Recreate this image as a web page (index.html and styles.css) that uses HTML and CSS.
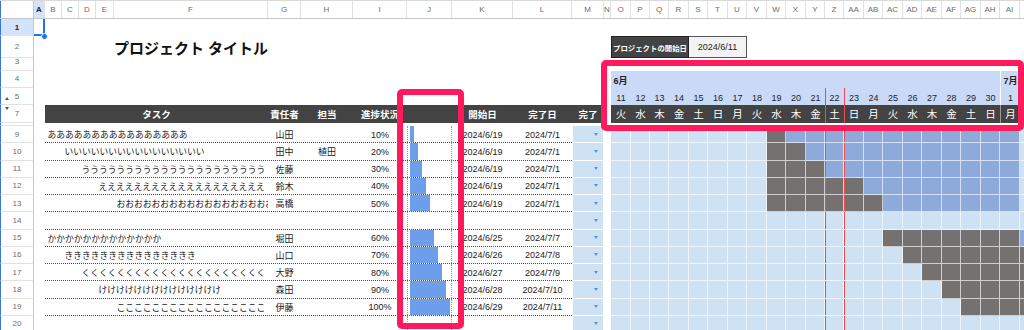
FILE: index.html
```html
<!DOCTYPE html>
<html lang="ja">
<head>
    <meta charset="UTF-8">
    <meta name="viewport" content="width=device-width, initial-scale=1.0">
    <title>ガントチャート</title>
    <link rel="stylesheet" href="styles.css">
</head>
<body>
<div class="sheet">
    <div class="colhead">
        <div class="corner"></div>
        <div class="on">A</div><div>B</div><div>C</div><div>D</div><div>E</div><div>F</div><div>G</div>
        <div>H</div><div>I</div><div>J</div><div>K</div><div>L</div><div>M</div><div>N</div>
        <div>O</div><div>P</div><div>Q</div><div>R</div><div>S</div><div>T</div><div>U</div>
        <div>V</div><div>W</div><div>X</div><div>Y</div><div>Z</div><div>AA</div><div>AB</div>
        <div>AC</div><div>AD</div><div>AE</div><div>AF</div><div>AG</div><div>AH</div><div>AI</div><div>AJ</div>
    </div>

    <div class="row">
        <div class="rh on">1</div>
        <div class="a1"><span class="handle"></span></div>
    </div>
    <div class="row">
        <div class="rh">2</div>
        <div class="tbl"><div class="title">プロジェクト タイトル</div></div>
        <div class="gantt">
            <div class="start-label">プロジェクトの開始日</div>
            <div class="start-value">2024/6/11</div>
        </div>
    </div>
    <div class="row"><div class="rh">3</div></div>
    <div class="row">
        <div class="rh">4</div>
        <div class="gantt band months" id="months"></div>
    </div>
    <div class="row">
        <div class="rh">5<span class="fold up"></span></div>
        <div class="gantt band days" id="days"></div>
    </div>
    <div class="row head">
        <div class="rh">7<span class="fold down"></span></div>
        <div class="tbl">
            <div class="task-h">タスク</div>
            <div>責任者</div>
            <div>担当</div>
            <div>進捗状況</div>
            <div></div>
            <div>開始日</div>
            <div>完了日</div>
        </div>
        <div class="m">完了</div>
        <div class="gantt weekdays" id="weekdays"></div>
    </div>
    <div class="row gap"><div class="rh"></div></div>

    <div id="rows"></div>

    <div class="mark mark-progress"></div>
    <div class="mark mark-calendar"></div>
</div>

<script>
    const span = 22;               // O .. AJ
    const week = ['日', '月', '火', '水', '木', '金', '土'];
    const first = new Date(2024, 5, 11);

    const tasks = [
        { text: 'あ'.repeat(16), lv: 1, owner: '山田', helper: '',    pct: 10,  from: '2024/6/19', to: '2024/7/1' },
        { text: 'い'.repeat(16), lv: 2, owner: '田中', helper: '植田', pct: 20,  from: '2024/6/19', to: '2024/7/1' },
        { text: 'う'.repeat(21), lv: 3, owner: '佐藤', helper: '',    pct: 30,  from: '2024/6/19', to: '2024/7/1' },
        { text: 'え'.repeat(19), lv: 4, owner: '鈴木', helper: '',    pct: 40,  from: '2024/6/19', to: '2024/7/1' },
        { text: 'お'.repeat(18), lv: 5, owner: '高橋', helper: '',    pct: 50,  from: '2024/6/19', to: '2024/7/1' },
        null,
        { text: 'か'.repeat(13), lv: 1, owner: '堀田', helper: '',    pct: 60,  from: '2024/6/25', to: '2024/7/7' },
        { text: 'き'.repeat(15), lv: 2, owner: '山口', helper: '',    pct: 70,  from: '2024/6/26', to: '2024/7/8' },
        { text: 'く'.repeat(21), lv: 3, owner: '大野', helper: '',    pct: 80,  from: '2024/6/27', to: '2024/7/9' },
        { text: 'け'.repeat(14), lv: 4, owner: '森田', helper: '',    pct: 90,  from: '2024/6/28', to: '2024/7/10' },
        { text: 'こ'.repeat(17), lv: 5, owner: '伊藤', helper: '',    pct: 100, from: '2024/6/29', to: '2024/7/11' },
        null
    ];

    function el(tag, cls, text) {
        const e = document.createElement(tag);
        if (cls) e.className = cls;
        if (text != null) e.textContent = text;
        return e;
    }
    function day(i) { return new Date(2024, 5, 11 + i); }
    function offset(str) {
        const [y, m, d] = str.split('/').map(Number);
        return Math.round((new Date(y, m - 1, d) - first) / 864e5);
    }
    const todayIdx = offset('2024/6/22');
    // red lines on both sides of today's column
    function markToday(c, i) {
        if (i === todayIdx || i === todayIdx + 1) c.classList.add('today-edge');
    }

    // calendar header
    const months = document.getElementById('months');
    const days = document.getElementById('days');
    const weekdays = document.getElementById('weekdays');
    for (let i = 0; i < span; i++) {
        const d = day(i);
        const isFirst = d.getDate() === 1;
        const m = el('div', isFirst ? 'new-month' : '', (i === 0 || isFirst) ? (d.getMonth() + 1) + '月' : null);
        const n = el('div', isFirst ? 'new-month' : '', d.getDate());
        const w = el('div', isFirst ? 'new-month' : '', week[d.getDay()]);
        markToday(n, i);
        markToday(w, i);
        months.append(m);
        days.append(n);
        weekdays.append(w);
    }

    // task rows
    const rows = document.getElementById('rows');
    tasks.forEach((t, k) => {
        const row = el('div', 'row');
        row.append(el('div', 'rh', k + 9));

        const tbl = el('div', 'tbl line');
        const prog = el('div', 'prog');
        let from = -1, to = -1, done = 0;
        if (t) {
            const bar = el('div', 'bar');
            bar.style.width = (t.pct * 0.4) + 'px';
            prog.append(bar);
            from = offset(t.from);
            to = offset(t.to);
            done = Math.floor((to - from + 1) * t.pct / 100);
        }
        tbl.append(
            el('div', 'task lv' + (t ? t.lv : 1), t ? t.text : ''),
            el('div', '', t ? t.owner : ''),
            el('div', '', t ? t.helper : ''),
            el('div', '', t ? t.pct + '%' : ''),
            prog,
            el('div', '', t ? t.from : ''),
            el('div', '', t ? t.to : '')
        );
        row.append(tbl, el('div', 'm dd'));

        const g = el('div', 'gantt');
        for (let i = 0; i < span; i++) {
            let cls = 'cell';
            if (t && i >= from && i < from + done) cls += ' done';
            else if (t && i >= from && i <= to) cls += ' plan';
            const c = el('div', cls);
            markToday(c, i);
            g.append(c);
        }
        row.append(g);
        rows.append(row);
    });
</script>
</body>
</html>
```

FILE: styles.css
```css
:root {
    /* day columns O..AJ, whole pixels so the grid lines stay crisp */
    --days: 20px 19px 19px 20px 19px 20px 19px 20px 19px 20px 19px 19px 20px 19px 20px 19px 20px 19px 20px 19px 20px 19px;
    --today-line: #f24a4a;
}
body {
    margin: 0;
    background: #fff;
    color: #222;
    font-family: "Liberation Sans", "Noto Sans CJK JP", sans-serif;
    overflow: hidden;
}
.sheet {
    position: relative;
    width: 1024px;
    height: 330px;
    overflow: hidden;
}

/* column letters */
.colhead {
    display: grid;
    grid-template-columns: 34px 11px 17px 17px 17px 18px 154px 33px 52px 54px 45px 61px 59px 32px 7px var(--days);
    height: 19px;
    box-sizing: border-box;
    border-top: 1px solid #d9d9d9;
    border-bottom: 1px solid #c6c6c6;
    font-size: 8px;
    color: #6b6b6b;
}
.colhead > div {
    display: flex;
    align-items: center;
    justify-content: center;
    border-right: 1px solid #e1e1e1;
    overflow: hidden;
}
.colhead .corner {
    border-left: 1px solid #3b73d6;
    border-right: 1px solid #c6c6c6;
}
.colhead .on {
    background: #d3e3fd;
    color: #1f1f1f;
    font-weight: bold;
}

/* sheet rows */
.row {
    display: grid;
    grid-template-columns: 34px 11px 527px 32px 7px 428px;
    height: 17.25px;
}
.row > div { min-width: 0; }
.gap { height: 3.5px; }

.rh {
    grid-column: 1;
    position: relative;
    display: flex;
    align-items: center;
    justify-content: center;
    box-sizing: border-box;
    border-left: 1px solid #3b73d6;
    border-right: 1px solid #c6c6c6;
    border-bottom: 1px solid #e1e1e1;
    font-size: 8px;
    color: #6b6b6b;
}
.rh.on {
    background: #d3e3fd;
    color: #1f1f1f;
    font-weight: bold;
}
.fold {
    position: absolute;
    left: 4px;
    width: 0;
    height: 0;
    border-left: 2.5px solid transparent;
    border-right: 2.5px solid transparent;
}
.fold.up   { bottom: 4px; border-bottom: 3px solid #555; }
.fold.down { top: 2px;    border-top: 3px solid #555; }

.a1 {
    grid-column: 2;
    position: relative;
    box-shadow: inset -2px -2px 0 #1a73e8;
}
.handle {
    position: absolute;
    right: -3px;
    bottom: -4px;
    width: 5px;
    height: 5px;
    border-radius: 50%;
    background: #1a73e8;
    border: 1px solid #fff;
}

/* task table B..L */
.tbl {
    grid-column: 3;
    display: grid;
    grid-template-columns: 17px 17px 17px 18px 154px 33px 52px 54px 45px 61px 59px;
    font-size: 9px;
}
.tbl > div {
    display: flex;
    align-items: center;
    justify-content: center;
    white-space: nowrap;
    min-width: 0;
    padding-top: 1px;
}
.line { border-bottom: 1px dotted #4a4a4a; }
.tbl .task {
    justify-content: flex-start;
    overflow: hidden;
    padding-left: 2.5px;
    font-size: 8.75px;
}
.lv1 { grid-column: 1 / 6; }
.lv2 { grid-column: 2 / 6; }
.lv3 { grid-column: 3 / 6; }
.lv4 { grid-column: 4 / 6; }
.lv5 { grid-column: 5 / 6; }

.tbl .prog {
    justify-content: flex-start;
    align-items: stretch;
    padding: 0 0 0 2px;
    border-left: 1px dotted #9a9a9a;
    border-right: 1px dotted #9a9a9a;
}
.bar { background: #6d9eeb; }

.tbl .title {
    grid-column: 5;
    font-size: 15px;
    font-weight: bold;
    color: #111;
    overflow: visible;
    padding-top: 1px;
}

.head .tbl,
.head .m {
    background: #434343;
    color: #fff;
    font-weight: bold;
    font-size: 9.5px;
}
.head .task-h { grid-column: 1 / 6; }

/* 完了 column */
.m {
    grid-column: 4;
    display: flex;
    align-items: center;
    justify-content: center;
}
.dd {
    justify-content: flex-end;
    box-sizing: border-box;
    padding-right: 5px;
    background: #cfe2f3;
    border: 1px solid #fff;
    border-top: 0;
}
.dd::after {
    content: "";
    border-left: 2.5px solid transparent;
    border-right: 2.5px solid transparent;
    border-top: 3px solid #5b8ee6;
}

/* calendar */
.gantt {
    grid-column: 6;
    display: grid;
    grid-template-columns: var(--days);
}
.gantt > div {
    box-sizing: border-box;
    display: flex;
    align-items: center;
    justify-content: center;
    white-space: nowrap;
}
.cell {
    background: #cfe2f3;
    border-right: 1px solid rgba(255, 255, 255, .65);
    border-bottom: 1px solid rgba(255, 255, 255, .65);
}
.cell.plan { background: #8eaadb; }
.cell.done { background: #757171; }

.band > div {
    background: #c9daf8;
    font-size: 9px;
    color: #222;
}
.months > div {
    justify-content: flex-start;
    padding: 2px 0 0 2.5px;
    font-weight: bold;
}
.days > div { padding-top: 2px; }
.new-month { border-left: 1px solid #fff; }

.weekdays > div {
    background: #434343;
    color: #fff;
    font-size: 10.5px;
}
.weekdays .new-month { border-left-color: #9a9a9a; }

.gantt .today-edge { box-shadow: inset 1px 0 0 var(--today-line); }

.gantt .start-label {
    grid-column: 1 / span 4;
    background: #434343;
    color: #fff;
    font-size: 7.4px;
    font-weight: bold;
    border: 1px solid #222;
}
.gantt .start-value {
    grid-column: span 3;
    background: #f3f3f3;
    border: 1px solid #555;
    border-left: 0;
    font-size: 9px;
    color: #222;
}

/* highlight frames */
.mark {
    position: absolute;
    z-index: 5;
    box-sizing: border-box;
    border: 6px solid #ff1a5c;
    border-radius: 5px;
}
.mark-progress { left: 397px; top: 89px;  width: 67px;  height: 240px; }
.mark-calendar { left: 601px; top: 60px;  width: 423px; height: 71px; }
```
